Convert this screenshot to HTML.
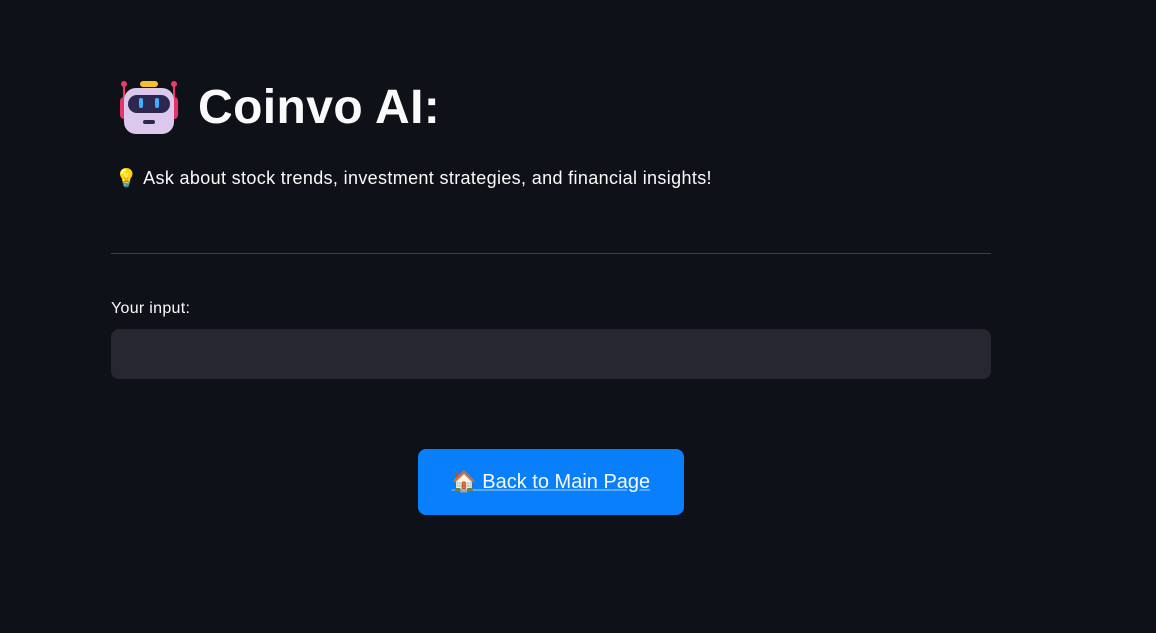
<!DOCTYPE html>
<html><head><meta charset="utf-8"><style>
body{margin:0;background:#0e1117;width:1156px;height:633px;overflow:hidden;font-family:"Liberation Sans",sans-serif;color:#fafafa;position:relative}
.a{position:absolute}
</style></head><body>
<svg class="a" style="left:118px;top:79px" width="62" height="58" viewBox="0 0 62 58">
<rect x="22" y="2" width="18" height="6" rx="3" fill="#f5c02a"/>
<line x1="6" y1="6" x2="6" y2="22" stroke="#f0386b" stroke-width="2"/>
<line x1="56" y1="6" x2="56" y2="22" stroke="#f0386b" stroke-width="2"/>
<circle cx="6" cy="5" r="3" fill="#f0386b"/><circle cx="56" cy="5" r="3" fill="#f0386b"/>
<rect x="2" y="18" width="8" height="22" rx="4" fill="#e8336a"/>
<rect x="52" y="18" width="8" height="22" rx="4" fill="#e8336a"/>
<rect x="6" y="9" width="50" height="46" rx="12" fill="#dcc8ec"/>
<rect x="10" y="16" width="42" height="18" rx="9" fill="#2c2850"/>
<rect x="21" y="19" width="4" height="10" rx="2" fill="#3fb0ff"/>
<rect x="37" y="19" width="4" height="10" rx="2" fill="#3fb0ff"/>
<rect x="25" y="41" width="12" height="4" rx="2" fill="#2c2850"/>
</svg>
<div class="a" style="left:198px;top:78px;font-size:48px;font-weight:bold;line-height:60px;letter-spacing:0.4px">Coinvo AI:</div>
<div class="a" style="left:115px;top:166px;font-size:18px;line-height:24px;letter-spacing:0.35px">💡&nbsp;Ask about stock trends, investment strategies, and financial insights!</div>
<div class="a" style="left:111px;top:253px;width:880px;height:1px;background:#3a3d46"></div>
<div class="a" style="left:111px;top:299px;font-size:16px;line-height:20px;letter-spacing:0.3px">Your input:</div>
<div class="a" style="left:111px;top:329px;width:880px;height:50px;background:#262730;border-radius:8px"></div>
<div class="a" style="left:418px;top:449px;width:266px;height:66px;background:#0a7ffb;border-radius:8px;text-align:center;line-height:66px;font-size:20px;text-decoration:underline;text-decoration-color:#5aa8ff">🏠 Back to Main Page</div>
</body></html>
